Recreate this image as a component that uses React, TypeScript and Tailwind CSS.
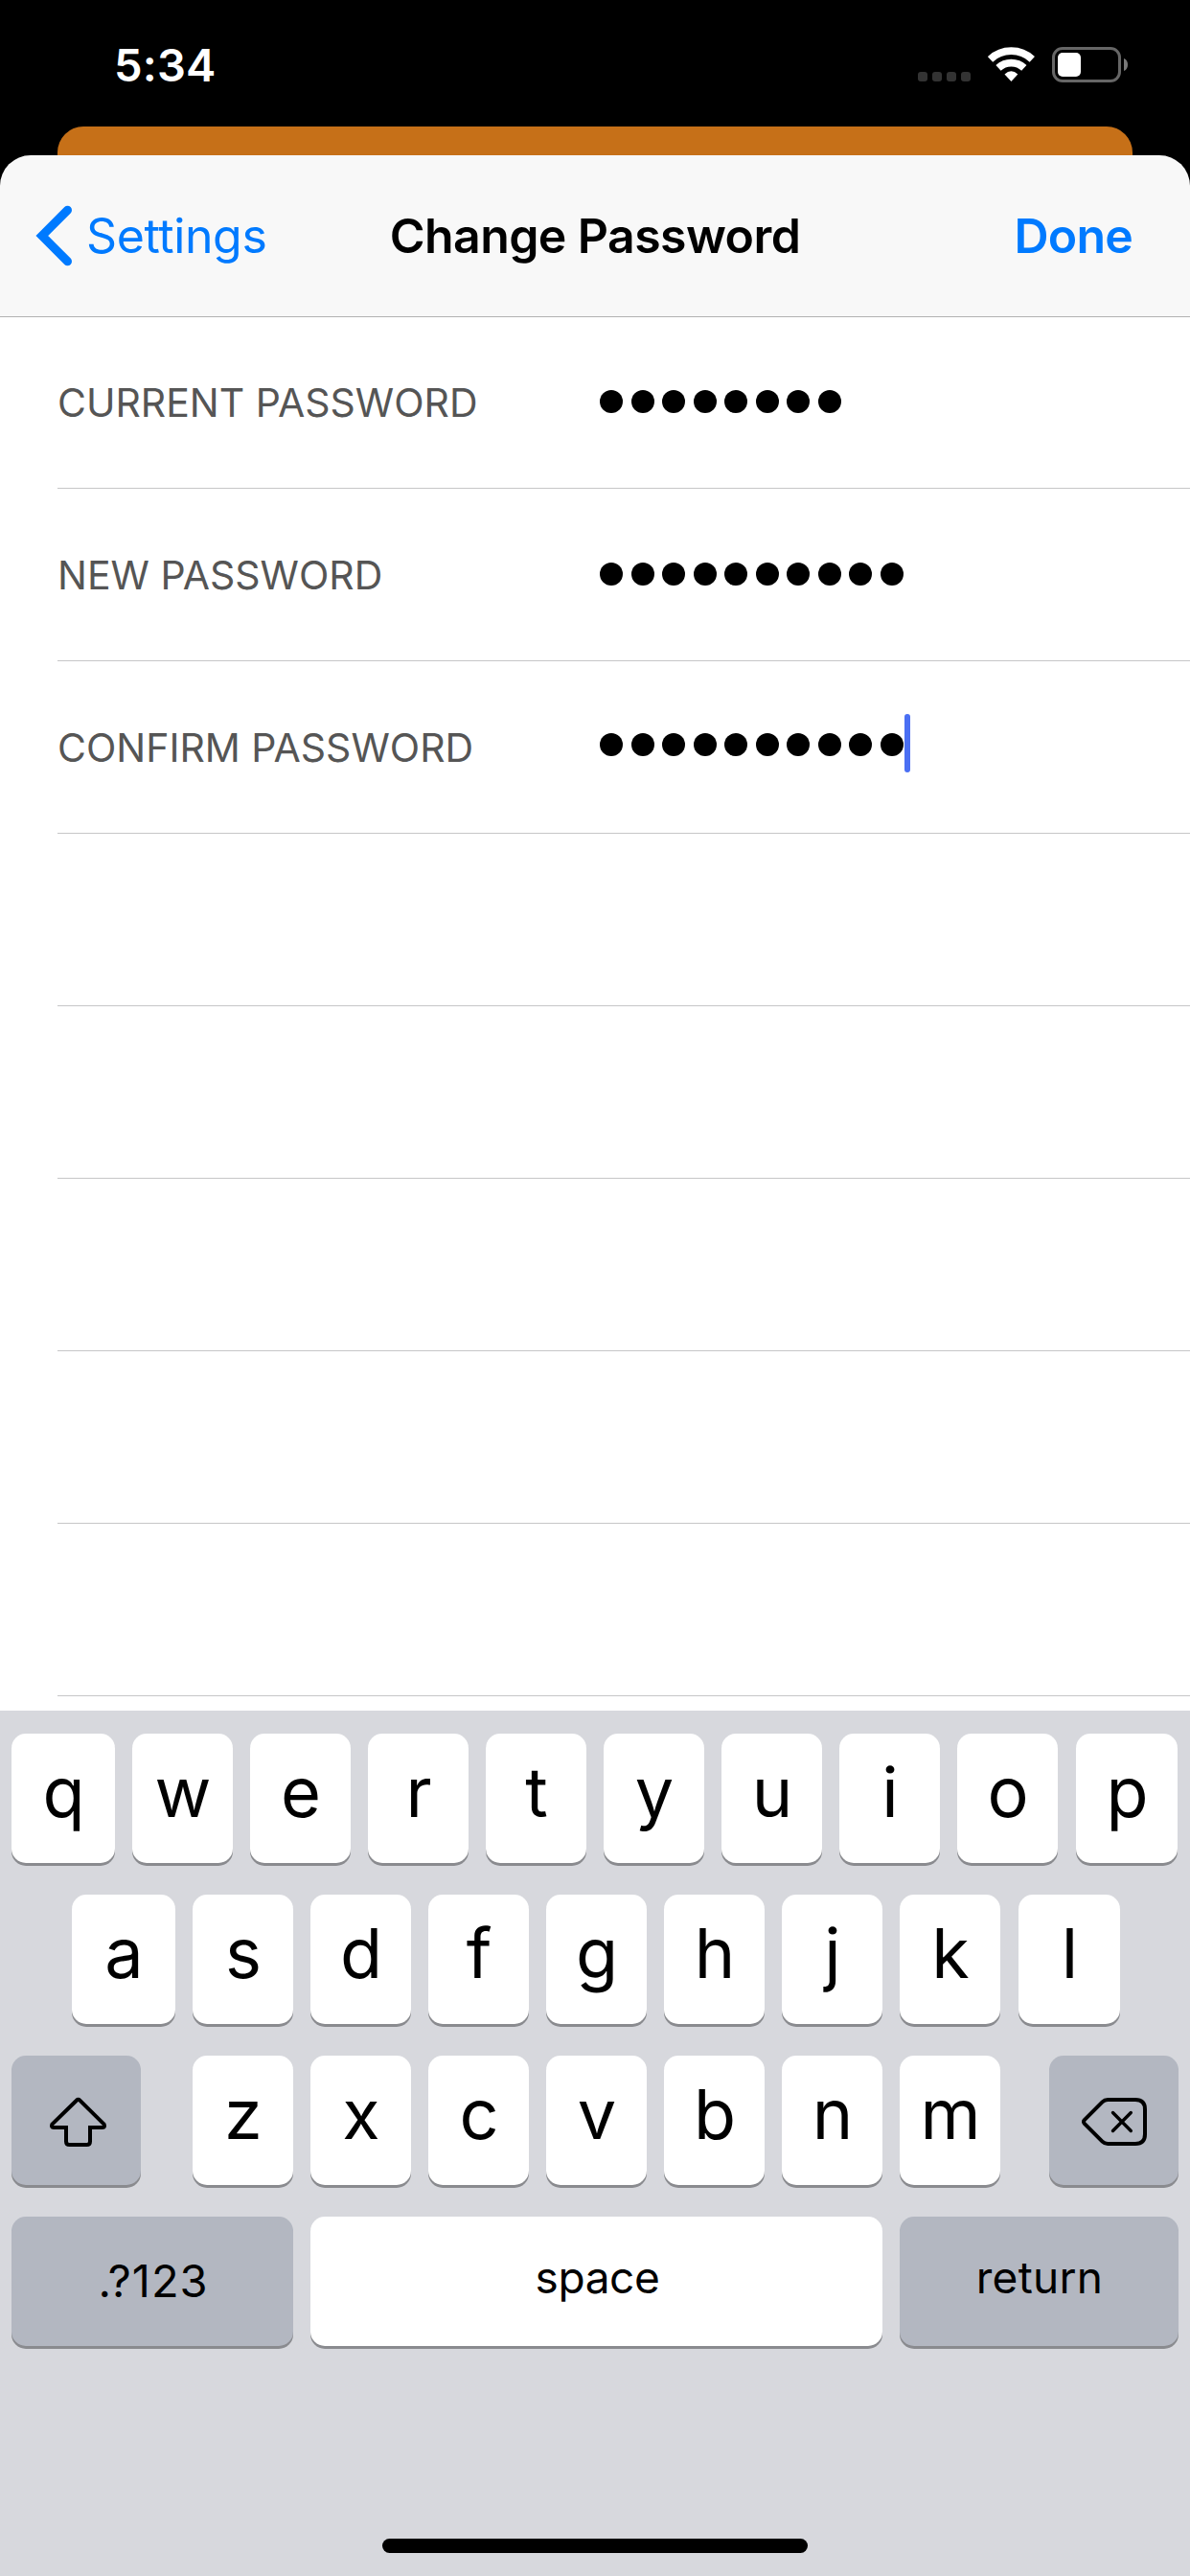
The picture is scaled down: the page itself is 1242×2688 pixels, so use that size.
import type { ReactNode } from "react";

const fields = [
  { label: "CURRENT PASSWORD", length: 8 },
  { label: "NEW PASSWORD", length: 10 },
  { label: "CONFIRM PASSWORD", length: 10, focused: true },
];

function StatusBar() {
  return (
    <div className="flex h-[132px] items-start justify-between pr-[63px] pl-[119px]">
      <span className="pt-[40px] text-[47px] leading-[56px] font-[570] tracking-[0.2px] text-white">5:34</span>
      <div className="flex pt-[49px]">
        <div className="mt-[26px] flex gap-[5px]">
          {[0, 1, 2, 3].map((i) => (
            <span key={i} className="size-[10px] rounded-[3px] bg-[#333333]" />
          ))}
        </div>
        <svg className="ml-[18px] h-[37px] w-[49px]" viewBox="0 0 49 37" fill="none" stroke="#fff">
          <path d="M2.5 12.9A31.9 31.9 0 0 1 46.3 12.9" strokeWidth="7.7" />
          <path d="M11 21.9A19.5 19.5 0 0 1 37.8 21.9" strokeWidth="7.7" />
          <path d="M24.4 36L17.5 28.6Q24.4 22 31.3 28.6Z" fill="#fff" stroke="none" />
        </svg>
        <svg className="ml-[18px] h-[37px] w-[81px]" viewBox="0 0 81 37" fill="none">
          <rect x="1.5" y="1.5" width="69" height="34" rx="9.5" stroke="#666" strokeWidth="3" />
          <rect x="6" y="6" width="24" height="25" rx="5" fill="#fff" />
          <path d="M75 12C78 13 79 16 79 18.5S78 24 75 25Z" fill="#7a7a7a" />
        </svg>
      </div>
    </div>
  );
}

function NavBar() {
  return (
    <div className="grid h-[169px] grid-cols-[1fr_auto_1fr] items-center border-b border-[#b2b2b2] text-[50px] leading-[60px]">
      <button className="flex items-center pl-[36px] text-[#007aff]">
        <svg className="h-[68px] w-[42px]" viewBox="0 0 42 68" fill="none" stroke="currentColor" strokeWidth="9">
          <path d="M34.5 7.2L7.8 34L34.5 60.8" strokeLinecap="round" />
        </svg>
        <span className="ml-[12px] tracking-[-0.38px]">Settings</span>
      </button>
      <h1 className="font-[570] tracking-[-0.58px] text-black">Change Password</h1>
      <button className="justify-self-end pr-[60px] font-[570] tracking-[-0.8px] text-[#007aff]">Done</button>
    </div>
  );
}

function PasswordRow({ label, length, focused }: { label: string; length: number; focused?: boolean }) {
  return (
    <div className="ml-[60px] flex h-[180px] items-center border-b border-[#c6c6c8] first:h-[179px]">
      <span className="w-[566px] text-[41px] leading-[50px] text-[#555555]">{label}</span>
      <div className={focused ? "flex items-center pb-[6px]" : "flex items-center pb-[2px]"}>
        <div className="flex gap-[8.55px]">
          {Array.from({ length }, (_, i) => (
            <span key={i} className="size-[24px] rounded-full bg-black" />
          ))}
        </div>
        {focused && <span className="-mt-[3px] ml-px h-[61px] w-[6px] rounded-[3px] bg-[#4a6ff3]" />}
      </div>
    </div>
  );
}

function Key({ children, className = "w-[105px]", dark }: { children: ReactNode; className?: string; dark?: boolean }) {
  return (
    <button
      className={`${className} ${dark ? "bg-[#b3b7c1]" : "bg-white"} flex h-[135px] items-center justify-center rounded-[15px] text-black shadow-[0_3px_0_#8a8b8f]`}
    >
      {children}
    </button>
  );
}

function Letters({ keys, wideEnds }: { keys: string; wideEnds?: boolean }) {
  return (
    <>
      {keys.split("").map((k, i) => {
        const first = wideEnds && i === 0;
        const last = wideEnds && i === keys.length - 1;
        return (
          <Key key={k} className={first ? "w-[108px]" : last ? "ml-px w-[106px]" : "w-[105px]"}>
            <span className="pb-[13px] pl-px text-[72px] leading-[88px] font-[370]">{k}</span>
          </Key>
        );
      })}
    </>
  );
}

function Keyboard() {
  return (
    <div className="flex h-[903px] flex-col bg-[#d7d8dd] px-[12px] pt-[24px]">
      <div className="flex flex-col gap-[33px]">
        <div className="flex gap-[18px]">
          <Letters keys="qwertyuiop" wideEnds />
        </div>
        <div className="flex gap-[18px] pl-[63px]">
          <Letters keys="asdfghjkl" wideEnds />
        </div>
        <div className="flex">
          <Key className="w-[135px]" dark>
            <svg className="size-[135px]" viewBox="0 0 135 135" fill="none" stroke="#000" strokeWidth="4">
              <path d="M67.9 46.7Q69.6 45 71.3 46.7L96.6 71.6Q98 75 95 75H82V89.5Q82 93 78.5 93H60.5Q57 93 57 89.5V75H44Q41 75 42.4 71.6Z" />
            </svg>
          </Key>
          <div className="mr-[51px] ml-[54px] flex gap-[18px]">
            <Letters keys="zxcvbnm" />
          </div>
          <Key className="w-[135px]" dark>
            <svg className="size-[135px]" viewBox="0 0 135 135" fill="none" stroke="#000" strokeWidth="4" strokeLinecap="round">
              <path d="M36.8 67.2L55.5 48.4Q57.9 46 61.2 46H90Q100 46 100 56V82Q100 92 90 92H61.2Q57.9 92 55.5 89.6L36.8 70.8Q35.2 69 36.8 67.2Z" />
              <path d="M66.5 59.5L85.3 78.5M85.3 59.5L66.5 78.5" strokeWidth="3.4" />
            </svg>
          </Key>
        </div>
        <div className="flex gap-[18px] text-[46px] leading-[56px]">
          <Key className="w-[294px]" dark>
            <span className="pb-px pl-[2px] text-[47px] tracking-[1px]">.?123</span>
          </Key>
          <Key className="w-[597px]">
            <span className="pb-[9px] pl-[2px] tracking-[-0.4px]">space</span>
          </Key>
          <Key className="w-[291px]" dark>
            <span className="pb-[9px] pl-px tracking-[0.3px]">return</span>
          </Key>
        </div>
      </div>
      <div className="mt-auto mb-[24px] h-[15px] w-[444px] self-center rounded-full bg-black" />
    </div>
  );
}

export default function App() {
  return (
    <div className="flex h-[2688px] w-[1242px] flex-col overflow-hidden bg-black font-['Inter',sans-serif]">
      <StatusBar />
      <div className="mx-[60px] h-[30px] shrink-0 rounded-t-[27px] bg-[#c67018]" />
      <div className="flex flex-1 flex-col overflow-hidden rounded-t-[32px] bg-[#f8f8f8]">
        <NavBar />
        <div className="h-[1454px] bg-white">
          {fields.map((f) => (
            <PasswordRow key={f.label} {...f} />
          ))}
          {[0, 1, 2, 3, 4].map((i) => (
            <div key={i} className="ml-[60px] h-[180px] border-b border-[#c6c6c8]" />
          ))}
        </div>
        <Keyboard />
      </div>
    </div>
  );
}
